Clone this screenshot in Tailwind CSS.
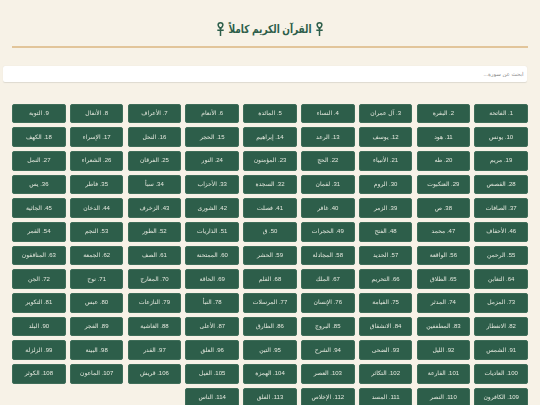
<!DOCTYPE html>
<html lang="ar" dir="rtl">
<head>
    <meta charset="UTF-8">
    <script src="https://cdn.jsdelivr.net/npm/@tailwindcss/browser@4"></script>
    <title>القرآن الكريم كاملاً</title>
</head>
<body class="h-[405px] overflow-hidden bg-[#f7f2e7] font-['Liberation_Sans','DejaVu_Sans',sans-serif]">
    <header class="mx-[12px] pt-[19px]">
        <h1 class="flex h-[29px] items-start justify-center gap-[4px] border-b-2 border-[#e2c59a] text-[9px] leading-[20px] font-bold text-[#2d5e4a]">
            <svg class="mt-[3px] h-[14px] w-[7px]" viewBox="0 0 7 14" fill="none" stroke="#2d5e4a" stroke-width="1.5"><path d="M3.5 0.8C2 0.8 1.1 1.9 1.1 3.1C1.1 4.4 2.3 5.6 3.5 6.6C4.7 5.6 5.9 4.4 5.9 3.1C5.9 1.9 5 0.8 3.5 0.8Z"/><path d="M3.5 6.6V14M0.3 8.2H6.7"/></svg>
            <span class="scale-y-125">القرآن الكريم كاملاً</span>
            <svg class="mt-[3px] h-[14px] w-[7px]" viewBox="0 0 7 14" fill="none" stroke="#2d5e4a" stroke-width="1.5"><path d="M3.5 0.8C2 0.8 1.1 1.9 1.1 3.1C1.1 4.4 2.3 5.6 3.5 6.6C4.7 5.6 5.9 4.4 5.9 3.1C5.9 1.9 5 0.8 3.5 0.8Z"/><path d="M3.5 6.6V14M0.3 8.2H6.7"/></svg>
        </h1>
    </header>

    <!-- search -->
    <div class="mt-[18px] mr-[13px] ml-[3px]">
        <input type="text" placeholder="ابحث عن سورة..." class="block h-[15.5px] w-full rounded-[2px] bg-white px-[3.5px] text-[5.5px] shadow-[0_0.5px_1px_rgba(0,0,0,0.1)] outline-none placeholder:text-[#8a8a8a]">
    </div>

    <!-- surah grid -->
    <div class="mx-[12px] mt-[22px] grid transform-gpu grid-cols-9 gap-x-[4.1px] gap-y-[4px] text-[6px] text-[#e6e9df] *:flex *:h-[19.7px] *:items-center *:justify-center *:rounded-[2px] *:border *:border-[#3f6d59] *:bg-[#2d5e4a]">
        <a>1. الفاتحة</a><a>2. البقرة</a><a>3. آل عمران</a><a>4. النساء</a><a>5. المائدة</a><a>6. الأنعام</a><a>7. الأعراف</a><a>8. الأنفال</a><a>9. التوبة</a>
        <a>10. يونس</a><a>11. هود</a><a>12. يوسف</a><a>13. الرعد</a><a>14. إبراهيم</a><a>15. الحجر</a><a>16. النحل</a><a>17. الإسراء</a><a>18. الكهف</a>
        <a>19. مريم</a><a>20. طه</a><a>21. الأنبياء</a><a>22. الحج</a><a>23. المؤمنون</a><a>24. النور</a><a>25. الفرقان</a><a>26. الشعراء</a><a>27. النمل</a>
        <a>28. القصص</a><a>29. العنكبوت</a><a>30. الروم</a><a>31. لقمان</a><a>32. السجدة</a><a>33. الأحزاب</a><a>34. سبأ</a><a>35. فاطر</a><a>36. يس</a>
        <a>37. الصافات</a><a>38. ص</a><a>39. الزمر</a><a>40. غافر</a><a>41. فصلت</a><a>42. الشورى</a><a>43. الزخرف</a><a>44. الدخان</a><a>45. الجاثية</a>
        <a>46. الأحقاف</a><a>47. محمد</a><a>48. الفتح</a><a>49. الحجرات</a><a>50. ق</a><a>51. الذاريات</a><a>52. الطور</a><a>53. النجم</a><a>54. القمر</a>
        <a>55. الرحمن</a><a>56. الواقعة</a><a>57. الحديد</a><a>58. المجادلة</a><a>59. الحشر</a><a>60. الممتحنة</a><a>61. الصف</a><a>62. الجمعة</a><a>63. المنافقون</a>
        <a>64. التغابن</a><a>65. الطلاق</a><a>66. التحريم</a><a>67. الملك</a><a>68. القلم</a><a>69. الحاقة</a><a>70. المعارج</a><a>71. نوح</a><a>72. الجن</a>
        <a>73. المزمل</a><a>74. المدثر</a><a>75. القيامة</a><a>76. الإنسان</a><a>77. المرسلات</a><a>78. النبأ</a><a>79. النازعات</a><a>80. عبس</a><a>81. التكوير</a>
        <a>82. الانفطار</a><a>83. المطففين</a><a>84. الانشقاق</a><a>85. البروج</a><a>86. الطارق</a><a>87. الأعلى</a><a>88. الغاشية</a><a>89. الفجر</a><a>90. البلد</a>
        <a>91. الشمس</a><a>92. الليل</a><a>93. الضحى</a><a>94. الشرح</a><a>95. التين</a><a>96. العلق</a><a>97. القدر</a><a>98. البينة</a><a>99. الزلزلة</a>
        <a>100. العاديات</a><a>101. القارعة</a><a>102. التكاثر</a><a>103. العصر</a><a>104. الهمزة</a><a>105. الفيل</a><a>106. قريش</a><a>107. الماعون</a><a>108. الكوثر</a>
        <a>109. الكافرون</a><a>110. النصر</a><a>111. المسد</a><a>112. الإخلاص</a><a>113. الفلق</a><a>114. الناس</a>
    </div>
</body>
</html>
